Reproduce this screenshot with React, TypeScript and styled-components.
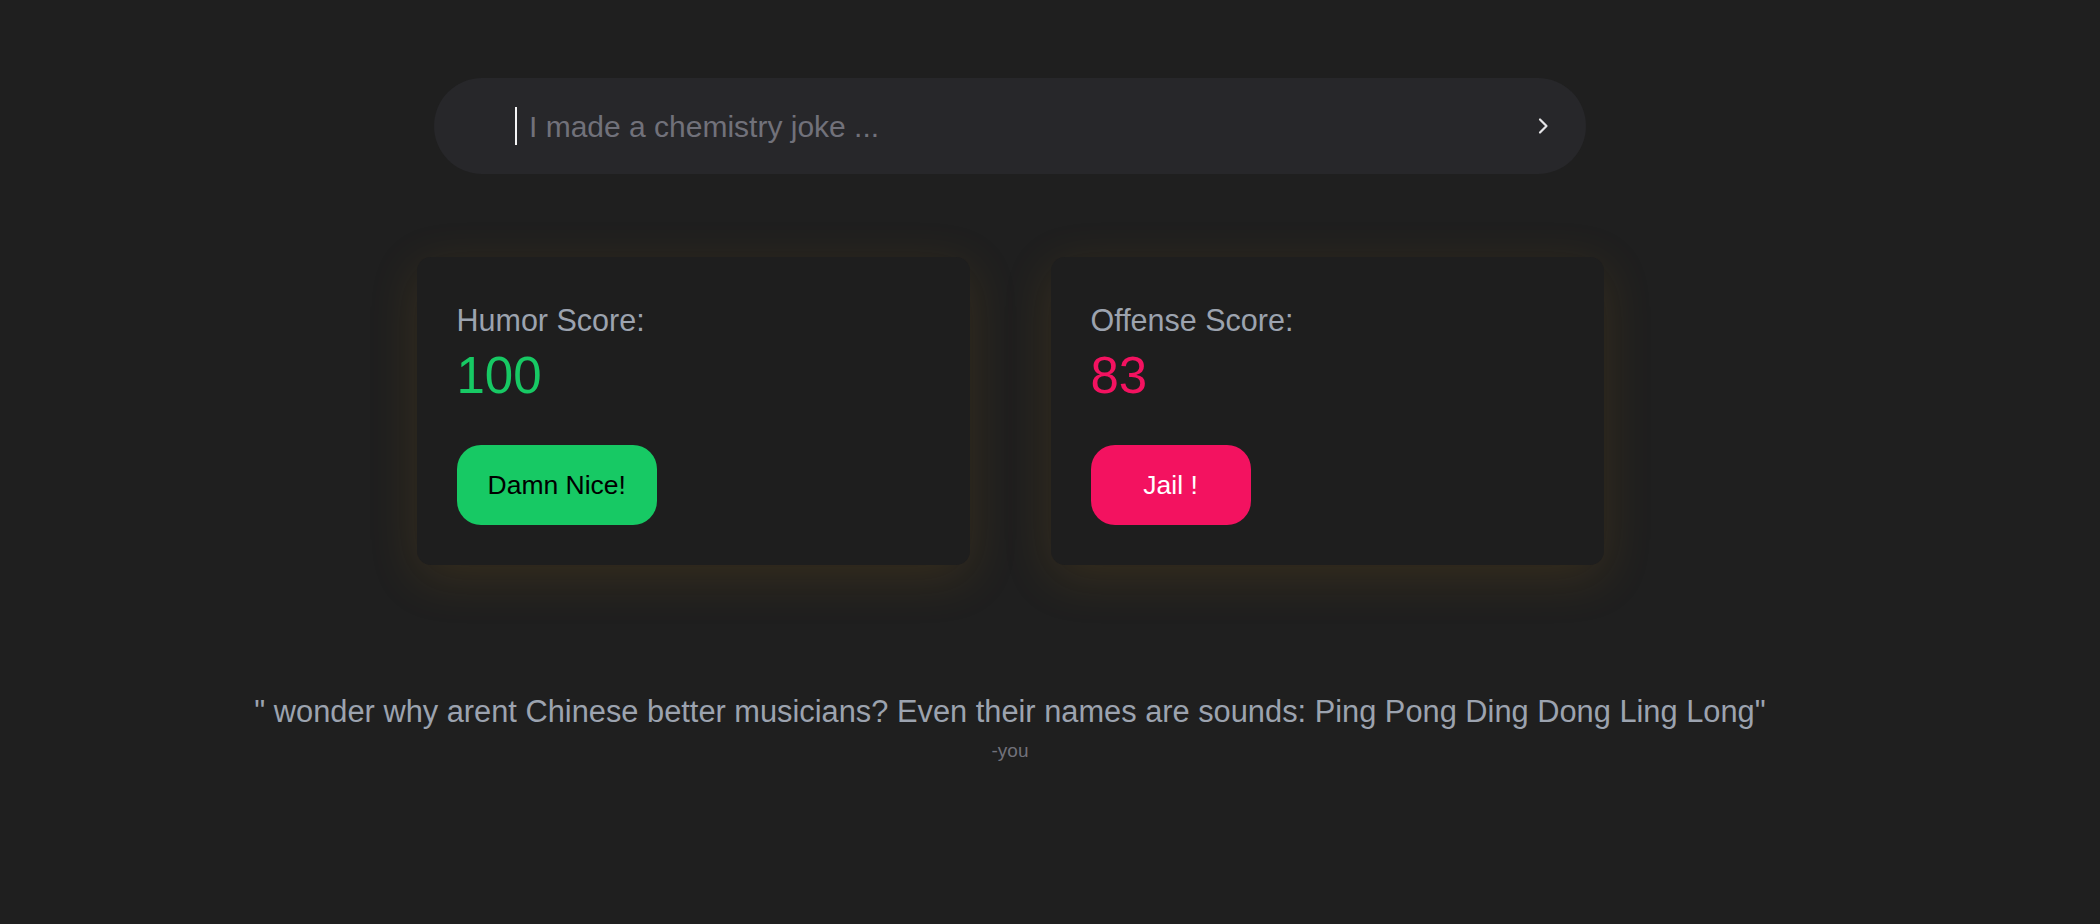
import React from "react";
import styled, { createGlobalStyle } from "styled-components";

const Global = createGlobalStyle`
  html, body { margin: 0; padding: 0; background: #1f1f1f; }
  body { font-family: "Liberation Sans", Arial, sans-serif; }
  * { box-sizing: border-box; }
`;

const Page = styled.main`
  min-height: 924px;
  padding: 78px 80px 0 0;
  display: flex;
  flex-direction: column;
  align-items: center;
`;

const SearchBar = styled.form`
  width: 1152px;
  height: 96px;
  border-radius: 48px;
  background: #27272a;
  display: flex;
  align-items: center;
  padding: 0 36px 0 81px;
`;

const Caret = styled.span`
  width: 2px;
  height: 38px;
  background: #f4f4f5;
  flex: none;
`;

const Input = styled.input`
  flex: 1;
  background: transparent;
  border: none;
  outline: none;
  caret-color: transparent;
  color: #e4e4e7;
  font-family: "Liberation Sans", Arial, sans-serif;
  font-size: 30px;
  padding: 2px 0 0 12px;
  &::placeholder { color: #71717a; }
`;

const SendButton = styled.button`
  background: none;
  border: none;
  padding: 0;
  width: 14px;
  height: 20px;
  display: flex;
  align-items: center;
  justify-content: center;
  color: #e4e4e7;
  cursor: pointer;
`;

const Cards = styled.section`
  margin-top: 83px;
  display: flex;
  gap: 81px;
`;

const Card = styled.div`
  width: 553px;
  height: 308px;
  background: #1e1e1e;
  border-radius: 14px;
  box-shadow: 0 12px 50px rgba(190, 130, 20, 0.15);
  padding: 43px 40px 40px;
  display: flex;
  flex-direction: column;
  align-items: flex-start;
`;

const Label = styled.div`
  color: #9ca3af;
  font-size: 30.5px;
  line-height: 40px;
`;

const Score = styled.div<{ $color: string }>`
  color: ${(p) => p.$color};
  font-size: 51px;
  line-height: 58px;
  margin-top: 7px;
`;

const ActionButton = styled.button<{ $bg: string; $fg: string }>`
  margin-top: auto;
  height: 80px;
  min-width: 160px;
  padding: 0 31px;
  border: none;
  border-radius: 24px;
  background: ${(p) => p.$bg};
  color: ${(p) => p.$fg};
  font-family: "Liberation Sans", Arial, sans-serif;
  font-size: 26.5px;
  cursor: pointer;
`;

const Quote = styled.figure`
  margin: 127px 0 0;
  display: flex;
  flex-direction: column;
  align-items: center;
`;

const QuoteText = styled.blockquote`
  margin: 0;
  color: #9ca3af;
  font-size: 30.8px;
  line-height: 40px;
  white-space: nowrap;
`;

const Author = styled.figcaption`
  color: #71717a;
  font-size: 19px;
  line-height: 26px;
  margin-top: 6px;
`;

export default function App() {
  return (
    <>
      <Global />
      <Page>
        <SearchBar onSubmit={(e) => e.preventDefault()}>
          <Caret />
          <Input placeholder="I made a chemistry joke ..." />
          <SendButton type="submit" aria-label="send">
            <svg width="12" height="18" viewBox="0 0 12 18" fill="none">
              <path d="M3 2.5 L9.5 9 L3 15.5" stroke="currentColor" strokeWidth="2.2" strokeLinecap="round" strokeLinejoin="round" />
            </svg>
          </SendButton>
        </SearchBar>
        <Cards>
          <Card>
            <Label>Humor Score:</Label>
            <Score $color="#17c964">100</Score>
            <ActionButton $bg="#17c964" $fg="#000000">Damn Nice!</ActionButton>
          </Card>
          <Card>
            <Label>Offense Score:</Label>
            <Score $color="#f31260">83</Score>
            <ActionButton $bg="#f31260" $fg="#ffffff">Jail !</ActionButton>
          </Card>
        </Cards>
        <Quote>
          <QuoteText>" wonder why arent Chinese better musicians? Even their names are sounds: Ping Pong Ding Dong Ling Long"</QuoteText>
          <Author>-you</Author>
        </Quote>
      </Page>
    </>
  );
}
